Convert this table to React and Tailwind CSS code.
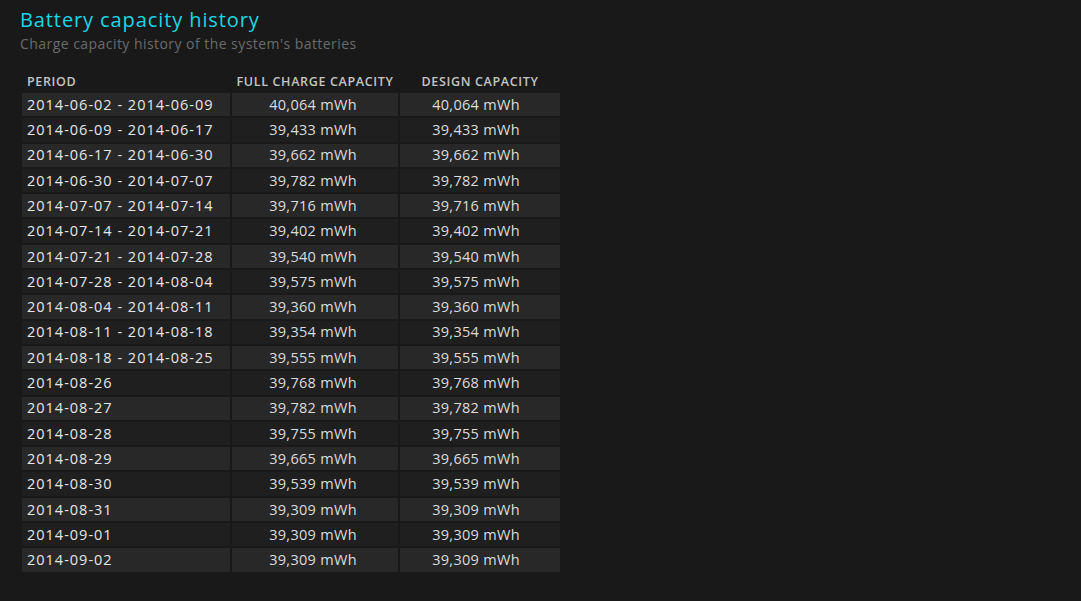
const rows = [
  ["2014-06-02 - 2014-06-09", "40,064 mWh", "40,064 mWh"],
  ["2014-06-09 - 2014-06-17", "39,433 mWh", "39,433 mWh"],
  ["2014-06-17 - 2014-06-30", "39,662 mWh", "39,662 mWh"],
  ["2014-06-30 - 2014-07-07", "39,782 mWh", "39,782 mWh"],
  ["2014-07-07 - 2014-07-14", "39,716 mWh", "39,716 mWh"],
  ["2014-07-14 - 2014-07-21", "39,402 mWh", "39,402 mWh"],
  ["2014-07-21 - 2014-07-28", "39,540 mWh", "39,540 mWh"],
  ["2014-07-28 - 2014-08-04", "39,575 mWh", "39,575 mWh"],
  ["2014-08-04 - 2014-08-11", "39,360 mWh", "39,360 mWh"],
  ["2014-08-11 - 2014-08-18", "39,354 mWh", "39,354 mWh"],
  ["2014-08-18 - 2014-08-25", "39,555 mWh", "39,555 mWh"],
  ["2014-08-26", "39,768 mWh", "39,768 mWh"],
  ["2014-08-27", "39,782 mWh", "39,782 mWh"],
  ["2014-08-28", "39,755 mWh", "39,755 mWh"],
  ["2014-08-29", "39,665 mWh", "39,665 mWh"],
  ["2014-08-30", "39,539 mWh", "39,539 mWh"],
  ["2014-08-31", "39,309 mWh", "39,309 mWh"],
  ["2014-09-01", "39,309 mWh", "39,309 mWh"],
  ["2014-09-02", "39,309 mWh", "39,309 mWh"],
];

export default function App() {
  return (
    <div
      className="w-[1081px] h-[601px] bg-[#191919] overflow-hidden"
      style={{ fontFamily: '"Open Sans", "Noto Sans", sans-serif' }}
    >
      <div className="pl-[20px] pt-[6px]">
        <h1 className="text-[20px] leading-[28px] text-[#1bd6e3] tracking-[0.9px]">
          Battery capacity history
        </h1>
        <p className="text-[14px] leading-[20px] text-[#6b6b6b] tracking-[0.45px]">
          Charge capacity history of the system's batteries
        </p>
      </div>
      <div className="pl-[22px] pt-[19px] flex flex-col gap-[2px]">
        <div className="flex gap-[2px] h-[18px] items-center text-[12.5px] font-semibold text-[#c4c4c4] tracking-[0.65px]">
          <div className="w-[208px] pl-[5px]">PERIOD</div>
          <div className="w-[166px] text-center">FULL CHARGE CAPACITY</div>
          <div className="w-[160px] text-center">DESIGN CAPACITY</div>
        </div>
        {rows.map((r, i) => (
          <div
            key={i}
            className="flex gap-[2px] h-[23.3px] items-stretch text-[14.5px] text-[#e6e6e6]"
          >
            <div className={(i % 2 === 0 ? "bg-[#282828]" : "bg-[#1f1f1f]") + " w-[208px] pl-[5px] flex items-center tracking-[1px]"}>
              {r[0]}
            </div>
            <div className={(i % 2 === 0 ? "bg-[#282828]" : "bg-[#1f1f1f]") + " w-[166px] pr-[4px] flex items-center justify-center tracking-[0.3px] text-[#dcdcdc]"}>
              {r[1]}
            </div>
            <div className={(i % 2 === 0 ? "bg-[#282828]" : "bg-[#1f1f1f]") + " w-[160px] pr-[8px] flex items-center justify-center tracking-[0.3px] text-[#dcdcdc]"}>
              {r[2]}
            </div>
          </div>
        ))}
      </div>
    </div>
  );
}
